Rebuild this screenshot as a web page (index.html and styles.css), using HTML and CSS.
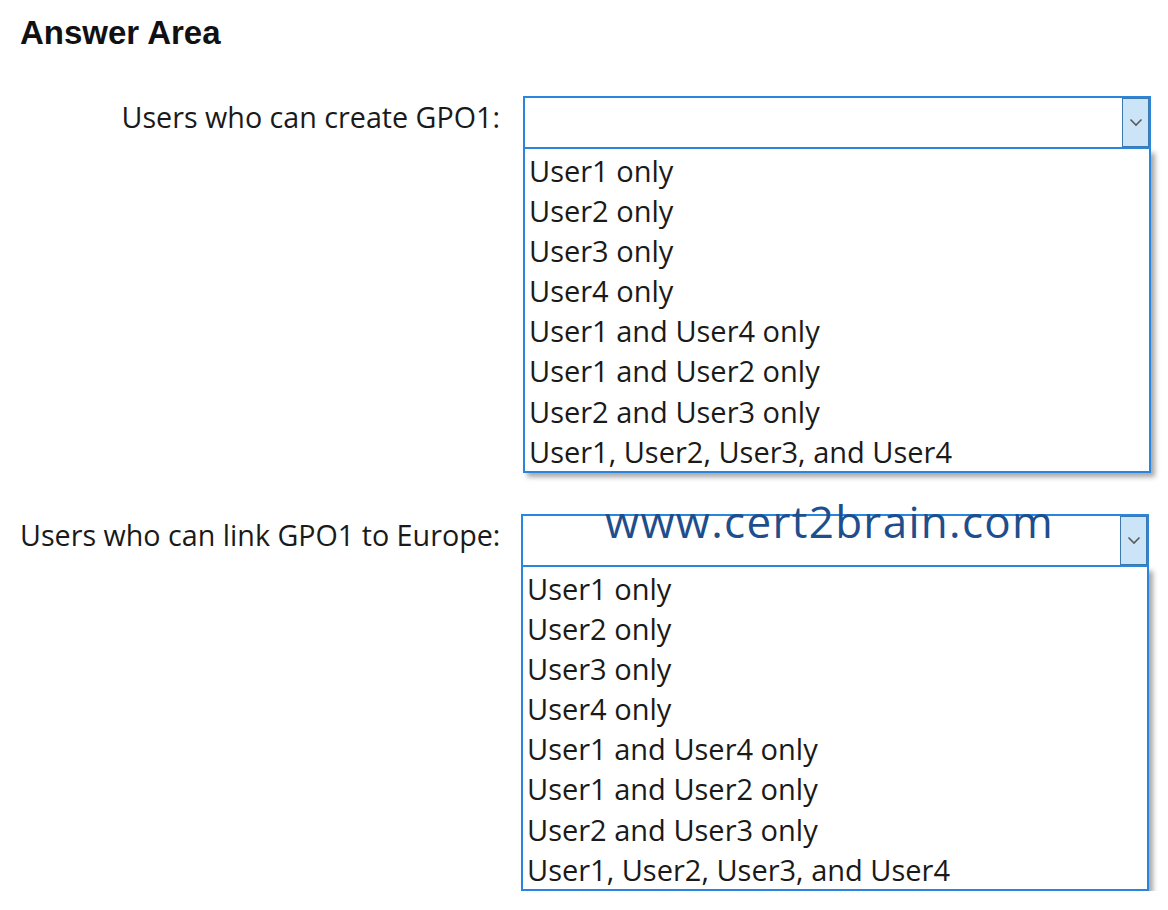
FILE: index.html
```html
<!DOCTYPE html>
<html>
<head>
<meta charset="utf-8">
<link rel="stylesheet" href="styles.css">
</head>
<body>
<div class="page">
  <h1 class="title">Answer Area</h1>
  <div class="row row-first">
    <div class="label">Users who can create GPO1:</div>
    <div class="dropdown">
      <div class="select">
        <div class="btn"><svg width="14" height="9" viewBox="0 0 14 9"><path d="M1.5 1.5 L7 7 L12.5 1.5" fill="none" stroke="#5a5a5a" stroke-width="1.6"/></svg></div>
      </div>
      <ul class="list">
        <li>User1 only</li>
        <li>User2 only</li>
        <li>User3 only</li>
        <li>User4 only</li>
        <li>User1 and User4 only</li>
        <li>User1 and User2 only</li>
        <li>User2 and User3 only</li>
        <li>User1, User2, User3, and User4</li>
      </ul>
    </div>
  </div>
  <div class="row row-second">
    <div class="label">Users who can link GPO1 to Europe:</div>
    <div class="dropdown dropdown-shift">
      <div class="select">
        <span class="watermark">www.cert2brain.com</span>
        <div class="btn"><svg width="14" height="9" viewBox="0 0 14 9"><path d="M1.5 1.5 L7 7 L12.5 1.5" fill="none" stroke="#5a5a5a" stroke-width="1.6"/></svg></div>
      </div>
      <ul class="list">
        <li>User1 only</li>
        <li>User2 only</li>
        <li>User3 only</li>
        <li>User4 only</li>
        <li>User1 and User4 only</li>
        <li>User1 and User2 only</li>
        <li>User2 and User3 only</li>
        <li>User1, User2, User3, and User4</li>
      </ul>
    </div>
  </div>
</div>
</body>
</html>
```
FILE: styles.css
```css
html, body {
  margin: 0;
  padding: 0;
  background: #ffffff;
}
.page {
  padding: 13px 0 0 20px;
  font-family: "Open Sans", "Noto Sans", sans-serif;
  color: #1a1a1a;
}
.title {
  margin: 0;
  font-family: "Liberation Sans", Arial, sans-serif;
  font-weight: bold;
  font-size: 33px;
  line-height: 40px;
  color: #111;
}
.row {
  display: grid;
  grid-template-columns: 480px 628px;
  column-gap: 23px;
  align-items: start;
}
.row-first {
  margin-top: 43px;
}
.row-second {
  margin-top: 41px;
}
.label {
  font-size: 28.7px;
  line-height: 41px;
  text-align: right;
  white-space: nowrap;
}
.dropdown {
  width: 628px;
}
.dropdown-shift {
  margin-left: -2px;
}
.select {
  position: relative;
  height: 53px;
  box-sizing: border-box;
  border: 2px solid #2a86dc;
  display: flex;
  justify-content: flex-end;
  background: #fff;
}
.btn {
  width: 27px;
  height: 49px;
  box-sizing: border-box;
  background: #cce4f7;
  border: 1px solid #3d79ad;
  display: flex;
  align-items: center;
  justify-content: center;
}
.watermark {
  position: absolute;
  left: 82px;
  top: -23px;
  font-size: 44px;
  line-height: 56px;
  color: #1f4e8c;
  letter-spacing: 1.3px;
}
.list {
  list-style: none;
  margin: 0;
  padding: 2px 0 0 4px;
  box-sizing: border-box;
  height: 324px;
  border: 2px solid #2a86dc;
  border-top: none;
  box-shadow: 4px 4px 5px rgba(0, 0, 0, 0.35);
  background: #fff;
}
.list li {
  font-size: 29px;
  line-height: 40.1px;
  height: 40.1px;
  white-space: nowrap;
}
```
